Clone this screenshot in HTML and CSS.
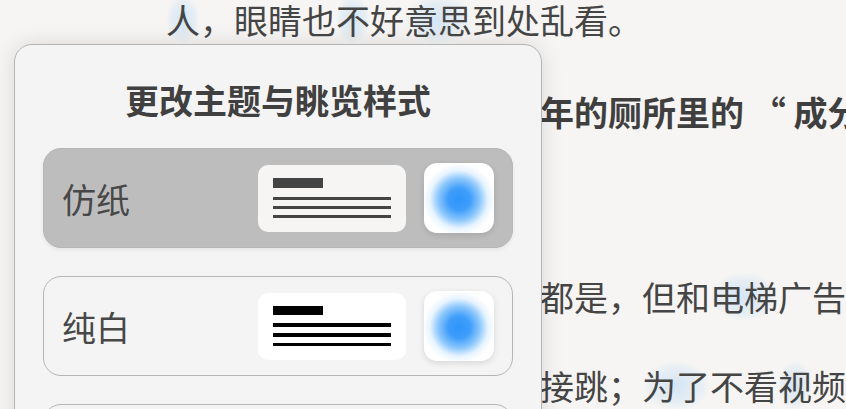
FILE: index.html
```html
<!DOCTYPE html>
<html lang="zh-CN">
<head>
    <meta charset="UTF-8">
    <meta name="viewport" content="width=device-width, initial-scale=1.0">
    <title>更改主题与眺览样式</title>
    <link rel="stylesheet" href="styles.css">
</head>
<body>

<div class="article">
    <p class="line first"><span class="hl">人</span>，眼睛也<span class="hl">不</span>好<span class="hl">意思</span>到处乱看。</p>
    <p class="line strong">这让我想起了小时候那些年的厕所里的 “ 成分复杂的小广告</p>
    <div class="para">
        <p class="line">现在手机里的广告到处也都是，但和<span class="hl">电梯</span>广告不同</p>
        <p class="line">有些广告甚至还会让你直接跳；<span class="hl">为了</span>不看<span class="hl">视</span>频广告</p>
    </div>
</div>

<div class="panel">
    <h2 class="panel-title">更改主题与眺览样式</h2>

    <div class="theme active">
        <span class="theme-name">仿纸</span>
        <div class="preview paper">
            <i class="bar"></i>
            <i class="rule"></i>
            <i class="rule"></i>
            <i class="rule"></i>
        </div>
        <div class="accent"></div>
    </div>

    <div class="theme">
        <span class="theme-name">纯白</span>
        <div class="preview white">
            <i class="bar"></i>
            <i class="rule"></i>
            <i class="rule"></i>
            <i class="rule"></i>
        </div>
        <div class="accent"></div>
    </div>

    <div class="theme">
        <span class="theme-name">夜间</span>
    </div>
</div>

</body>
</html>
```

FILE: styles.css
```css
body {
    margin: 0;
    background-color: #f6f5f3;
    font-family: "Noto Sans CJK SC", "Noto Sans", sans-serif;
    color: #454545;
    width: 846px;
    height: 409px;
    overflow: hidden;
    position: relative;
}
.article {
    padding-left: 166px;
    margin-top: -25px;
}
.line {
    margin: 0;
    font-size: 34px;
    line-height: 89px;
    height: 89px;
    white-space: nowrap;
}
.line.first {
    margin-bottom: 3px;
}
.line.strong {
    font-weight: bold;
    color: #3f3f3f;
}
.para {
    margin-top: 96px;
}
.hl {
    background: radial-gradient(ellipse at center, rgba(170, 210, 245, 0.45) 0%, rgba(170, 210, 245, 0.2) 50%, rgba(170, 210, 245, 0) 72%);
}

/* painel de temas */
.panel {
    position: absolute;
    left: 14px;
    top: 44px;
    width: 528px;
    height: 420px;
    background-color: #f4f4f4;
    border: 1px solid #b4b4b4;
    border-radius: 18px;
    box-shadow: 0 0 22px rgba(0, 0, 0, 0.12);
    padding: 35px 28px 0 28px;
    box-sizing: border-box;
}
.panel-title {
    margin: 0 0 28px;
    font-size: 34px;
    line-height: 40px;
    font-weight: bold;
    text-align: center;
    color: #404040;
}
.theme {
    display: flex;
    align-items: center;
    height: 100px;
    box-sizing: border-box;
    padding: 0 18px;
    border: 1px solid #b5b5b5;
    border-radius: 18px;
    margin-bottom: 28px;
}
.theme.active {
    background-color: #bdbdbd;
    border-color: #b6b6b6;
    box-shadow: 0 2px 4px rgba(0, 0, 0, 0.06);
}
.theme-name {
    flex: 1;
    font-size: 34px;
    color: #484848;
}
.preview {
    width: 148px;
    height: 67px;
    box-sizing: border-box;
    padding: 13px 15px;
    border-radius: 10px;
    display: flex;
    flex-direction: column;
    gap: 6px;
}
.preview .bar {
    width: 50px;
    height: 10px;
    margin-bottom: 3px;
}
.preview .rule {
    width: 118px;
}
.preview.paper {
    background-color: #f6f5f3;
}
.preview.paper .bar,
.preview.paper .rule {
    background-color: #444;
}
.preview.paper .rule {
    height: 3px;
}
.preview.white {
    background-color: #fff;
}
.preview.white .bar {
    background-color: #000;
    margin-bottom: 2px;
}
.preview.white .rule {
    background-color: #000;
    height: 4px;
}
.accent {
    width: 70px;
    height: 70px;
    margin-left: 18px;
    border-radius: 13px;
    background: radial-gradient(circle at 50% 52%, #2e95fa 0, rgba(52, 152, 250, 0.95) 11px, rgba(80, 170, 250, 0.65) 21px, rgba(160, 210, 255, 0.25) 29px, rgba(255, 255, 255, 0) 36px), #fff;
    box-shadow: 0 2px 6px rgba(0, 0, 0, 0.12);
}
```
